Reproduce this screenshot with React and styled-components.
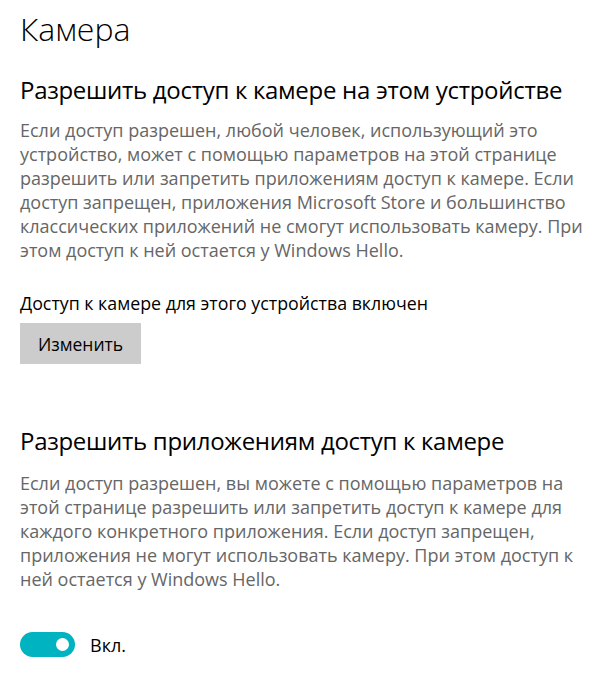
import React from 'react'
import styled, { createGlobalStyle } from 'styled-components'

const GlobalStyle = createGlobalStyle`
    body{
        margin : 0;
        background : #fff;
        font-family : "Open Sans", "Noto Sans", sans-serif;
        color : #000;
    }
`

const para1 = [
    'Если доступ разрешен, любой человек, использующий это',
    'устройство, может с помощью параметров на этой странице',
    'разрешить или запретить приложениям доступ к камере. Если',
    'доступ запрещен, приложения Microsoft Store и большинство',
    'классических приложений не смогут использовать камеру. При',
    'этом доступ к ней остается у Windows Hello.',
]

const para2 = [
    'Если доступ разрешен, вы можете с помощью параметров на',
    'этой странице разрешить или запретить доступ к камере для',
    'каждого конкретного приложения. Если доступ запрещен,',
    'приложения не могут использовать камеру. При этом доступ к',
    'ней остается у Windows Hello.',
]

function App(){
    return(
        <Page>
            <GlobalStyle />
            <Title>Камера</Title>

            <Heading>Разрешить доступ к камере на этом устройстве</Heading>
            <Description>
                {para1.map((line) => <Line key={line}>{line}</Line>)}
            </Description>

            <Status>Доступ к камере для этого устройства включен</Status>
            <Button>Изменить</Button>

            <Heading top={61}>Разрешить приложениям доступ к камере</Heading>
            <Description top={14}>
                {para2.map((line) => <Line key={line}>{line}</Line>)}
            </Description>

            <ToggleRow>
                <Toggle>
                    <Knob />
                </Toggle>
                <ToggleLabel>Вкл.</ToggleLabel>
            </ToggleRow>
        </Page>
    )
}

export default App

const Page = styled.div`
    padding : 9px 20px 0 20px;
    width : 592px;
    height : 674px;
    box-sizing : border-box;
    overflow : hidden;
`
const Title = styled.h1`
    margin : 0;
    font-size : 32px;
    line-height : 40px;
    font-weight : 300;
`
const Heading = styled.h2`
    margin : ${(p) => p.top || 25}px 0 0 0;
    font-size : 24px;
    letter-spacing : -0.3px;
    line-height : 32px;
    font-weight : 400;
    white-space : nowrap;
`
const Description = styled.div`
    margin-top : ${(p) => p.top || 12}px;
    font-size : 18px;
    line-height : 24px;
    color : #666;
`
const Line = styled.div`
    white-space : nowrap;
`
const Status = styled.div`
    margin-top : 29px;
    font-size : 17.8px;
    line-height : 24px;
`
const Button = styled.button`
    display : block;
    margin-top : 8px;
    width : 121px;
    height : 41px;
    border : none;
    background : #ccc;
    font-family : inherit;
    font-size : 17.5px;
    color : #000;
    padding : 0;
`
const ToggleRow = styled.div`
    display : flex;
    align-items : center;
    margin-top : 41px;
`
const Toggle = styled.div`
    width : 55px;
    height : 25px;
    border-radius : 13px;
    background : #00b3c0;
    display : flex;
    align-items : center;
    justify-content : flex-end;
    padding-right : 6px;
    box-sizing : border-box;
`
const Knob = styled.div`
    width : 13px;
    height : 13px;
    border-radius : 50%;
    background : #fff;
`
const ToggleLabel = styled.div`
    margin-left : 15px;
    font-size : 18px;
`
